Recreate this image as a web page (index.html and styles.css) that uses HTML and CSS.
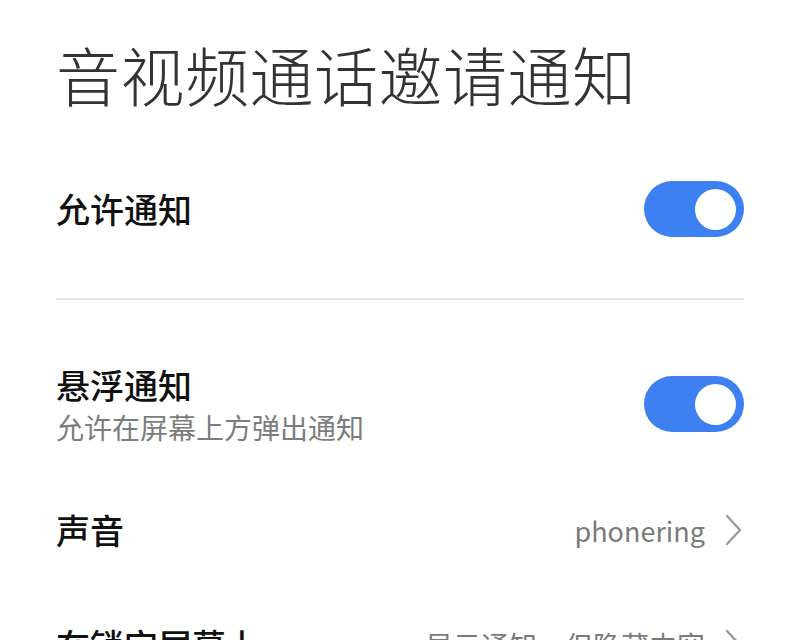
FILE: index.html
```html
<!DOCTYPE html>
<html lang="zh-CN">
<head>
  <meta charset="UTF-8" />
  <meta name="viewport" content="width=device-width, initial-scale=1.0"/>
  <title>音视频通话邀请通知</title>
  <link rel="stylesheet" href="styles.css">
</head>
<body>

<div class="page">
  <h1 class="page-title">音视频通话邀请通知</h1>

  <div class="row row-main">
    <div class="row-label">允许通知</div>
    <div class="switch on"><span class="knob"></span></div>
  </div>

  <div class="divider"></div>

  <div class="row row-float">
    <div class="row-text">
      <div class="row-label">悬浮通知</div>
      <div class="row-sub">允许在屏幕上方弹出通知</div>
    </div>
    <div class="switch on"><span class="knob"></span></div>
  </div>

  <div class="row row-sound">
    <div class="row-label">声音</div>
    <div class="row-value">
      <span>phonering</span>
      <svg class="chevron" width="18" height="32" viewBox="0 0 18 32"><polyline points="2,2 15,16 2,30" fill="none" stroke="#9a9a9a" stroke-width="2.4" stroke-linecap="round" stroke-linejoin="round"/></svg>
    </div>
  </div>

  <div class="row row-lock">
    <div class="row-label">在锁定屏幕上</div>
    <div class="row-value">
      <span>显示通知，但隐藏内容</span>
      <svg class="chevron" width="18" height="32" viewBox="0 0 18 32"><polyline points="2,2 15,16 2,30" fill="none" stroke="#9a9a9a" stroke-width="2.4" stroke-linecap="round" stroke-linejoin="round"/></svg>
    </div>
  </div>
</div>

</body>
</html>
```

FILE: styles.css
```css
* { box-sizing: border-box; }

html, body {
  margin: 0;
  padding: 0;
  background: #ffffff;
  overflow: hidden;
}

body {
  font-family: "Noto Sans CJK SC", "Noto Sans", sans-serif;
  color: #111;
}

.page {
  padding: 0 56px;
  height: 640px;
}

.page-title {
  margin: 0;
  padding-top: 35px;
  padding-bottom: 3px;
  font-size: 64px;
  line-height: 77px;
  font-weight: 300;
  color: #333;
  letter-spacing: 0.5px;
}

.row {
  display: flex;
  align-items: center;
  justify-content: space-between;
}

.row-main {
  padding-top: 66px;
  padding-bottom: 61px;
}

.row-float {
  padding-top: 62px;
}

.row-sound {
  padding-top: 60px;
}

.row-lock {
  padding-top: 67px;
}

.row-label {
  font-size: 34px;
  line-height: 48px;
  font-weight: 500;
  color: #111;
}

.row-float .row-label {
  line-height: 46px;
}

.row-sub {
  font-size: 28px;
  line-height: 38px;
  color: #7c7c7c;
}

.row-value {
  display: flex;
  align-items: center;
  gap: 20px;
  font-size: 27px;
  color: #7a7a7a;
  margin-right: 1px;
}

.row-lock .row-value {
  font-size: 28px;
}

.chevron {
  display: block;
}

.divider {
  height: 2px;
  background: #e8e8e8;
}

.switch {
  width: 100px;
  height: 56px;
  border-radius: 28px;
  background: #3c80f1;
  position: relative;
  flex-shrink: 0;
}

.switch .knob {
  position: absolute;
  top: 7.5px;
  right: 8px;
  width: 41px;
  height: 41px;
  border-radius: 50%;
  background: #fff;
}
```
